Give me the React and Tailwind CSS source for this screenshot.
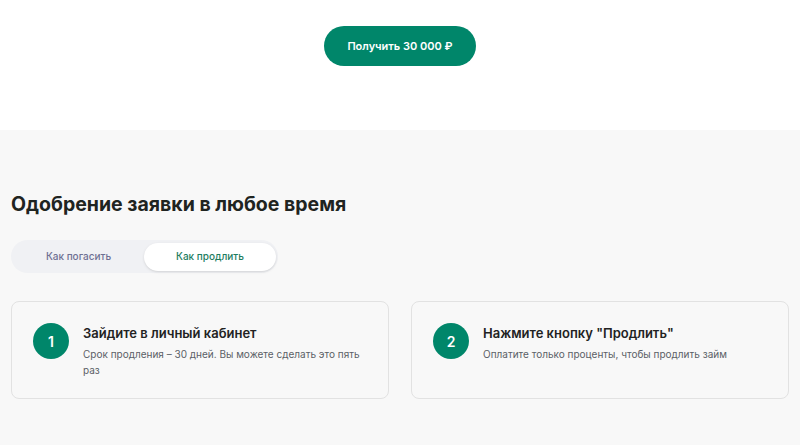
import { useState } from "react";

const steps = [
  {
    num: 1,
    title: "Зайдите в личный кабинет",
    text: "Срок продления – 30 дней. Вы можете сделать это пять раз",
  },
  {
    num: 2,
    title: 'Нажмите кнопку "Продлить"',
    text: "Оплатите только проценты, чтобы продлить займ",
  },
];

export default function App() {
  const [tab, setTab] = useState("extend"); // "repay" | "extend"

  return (
    <div className="min-h-screen bg-[#f8f8f8] font-['Inter',sans-serif]">
      {/* Top */}
      <div className="bg-white h-[130px] flex justify-center pt-[26px]">
        <button className="h-10 w-[152px] rounded-full bg-[#00866a] text-white text-[11px] font-semibold">
          Получить 30 000 ₽
        </button>
      </div>

      {/* Steps */}
      <div className="px-[11px] pt-[60px] pb-10">
        <h2 className="text-[19.5px] leading-7 font-bold text-[#1f2421]">
          Одобрение заявки в любое время
        </h2>

        <div className="mt-[22px] inline-flex h-[33px] items-center rounded-full bg-[#f0f1f4] p-[2px]">
          <button
            onClick={() => setTab("repay")}
            className={`h-[28px] w-[131px] rounded-full text-[10px] font-medium ${
              tab === "repay" ? "bg-white text-[#1e7d5f] shadow-sm" : "text-[#6e7093]"
            }`}
          >
            Как погасить
          </button>
          <button
            onClick={() => setTab("extend")}
            className={`h-[28px] w-[132px] rounded-full text-[10px] font-medium ${
              tab === "extend" ? "bg-white text-[#1e7d5f] shadow-sm" : "text-[#6e7093]"
            }`}
          >
            Как продлить
          </button>
        </div>

        <div className="mt-[28px] grid grid-cols-2 gap-[22px]">
          {steps.map((s) => (
            <div
              key={s.num}
              className="h-[98px] rounded-lg border border-[#e2e2e2] flex items-start gap-[14px] pl-[21px] pr-[22px] pt-[21px]"
            >
              <div className="w-9 h-9 shrink-0 rounded-full bg-[#00866a] flex items-center justify-center text-white text-[14px] font-semibold">
                {s.num}
              </div>
              <div>
                <h3 className="text-[13px] leading-5 font-semibold text-[#222]">{s.title}</h3>
                <p className="mt-[3px] text-[10px] leading-4 text-[#5b5f66]">{s.text}</p>
              </div>
            </div>
          ))}
        </div>
      </div>
    </div>
  );
}
